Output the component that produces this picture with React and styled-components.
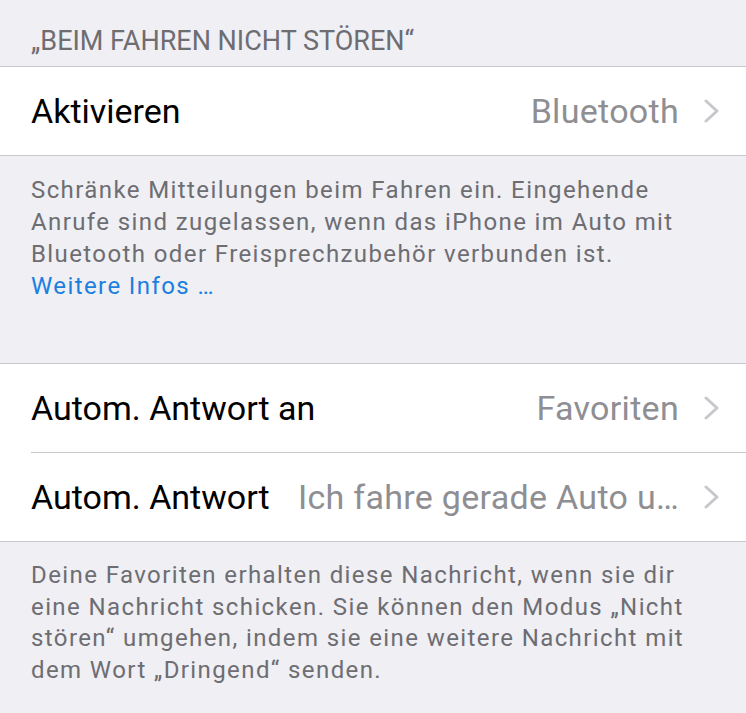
import React from "react";
import styled, { createGlobalStyle } from "styled-components";

const GlobalStyle = createGlobalStyle`
  html, body {
    margin: 0;
    padding: 0;
    background: #efeff4;
  }
  body {
    font-family: Roboto, "Liberation Sans", sans-serif;
    -webkit-font-smoothing: antialiased;
  }
`;

const Page = styled.div`
  width: 746px;
  height: 713px;
  overflow: hidden;
  background: #efeff4;
`;

const SectionHeader = styled.div`
  height: 66px;
  padding: 25px 31px 0 31px;
  box-sizing: border-box;
  font-size: 27px;
  line-height: 32px;
  color: #6d6d72;
  text-transform: uppercase;
`;

const Group = styled.div`
  background: #ffffff;
  border-top: 1px solid #c8c7cc;
  border-bottom: 1px solid #c8c7cc;
`;

const Row = styled.div`
  display: flex;
  align-items: center;
  height: 88px;
  padding: 0 27px 0 31px;

  & + & {
    border-top: 1px solid #c8c7cc;
    margin-left: 31px;
    padding-left: 0;
  }
`;

const Label = styled.span`
  font-size: 34px;
  color: #000000;
  white-space: nowrap;
  flex-shrink: 0;
`;

const Value = styled.span`
  flex: 1;
  min-width: 0;
  margin-left: 24px;
  text-align: right;
  font-size: 34px;
  letter-spacing: 0.3px;
  color: #8e8e93;
  white-space: nowrap;
  overflow: hidden;
  text-overflow: ellipsis;
`;

const Chevron = styled.svg`
  width: 15px;
  height: 24px;
  margin-left: 25px;
  flex-shrink: 0;
`;

const Footer = styled.div`
  padding: ${(p) => p.$top}px 31px ${(p) => p.$bottom}px 31px;
  font-size: 24px;
  line-height: ${(p) => p.$line}px;
  letter-spacing: 1.4px;
  color: #6d6d72;
`;

const Link = styled.span`
  color: #1b7fe0;
  display: block;
`;

const Arrow = () => (
  <Chevron viewBox="0 0 15 24">
    <polyline
      points="2,2 13,12 2,22"
      fill="none"
      stroke="#c7c7cc"
      strokeWidth="3"
      strokeLinecap="round"
      strokeLinejoin="round"
    />
  </Chevron>
);

const SettingRow = ({ label, value }) => (
  <Row>
    <Label>{label}</Label>
    <Value>{value}</Value>
    <Arrow />
  </Row>
);

export default function App() {
  return (
    <Page>
      <GlobalStyle />
      <SectionHeader>„Beim Fahren nicht stören“</SectionHeader>
      <Group>
        <SettingRow label="Aktivieren" value="Bluetooth" />
      </Group>
      <Footer $top={18} $bottom={61} $line={32}>
        Schränke Mitteilungen beim Fahren ein. Eingehende Anrufe sind
        zugelassen, wenn das iPhone im Auto mit Bluetooth oder
        Freisprechzubehör verbunden ist.
        <Link>Weitere Infos …</Link>
      </Footer>
      <Group>
        <SettingRow label="Autom. Antwort an" value="Favoriten" />
        <SettingRow label="Autom. Antwort" value="Ich fahre gerade Auto u…" />
      </Group>
      <Footer $top={18} $bottom={20} $line={31.5}>
        Deine Favoriten erhalten diese Nachricht, wenn sie dir eine Nachricht
        schicken. Sie können den Modus „Nicht stören“ umgehen, indem sie eine
        weitere Nachricht mit dem Wort „Dringend“ senden.
      </Footer>
    </Page>
  );
}
